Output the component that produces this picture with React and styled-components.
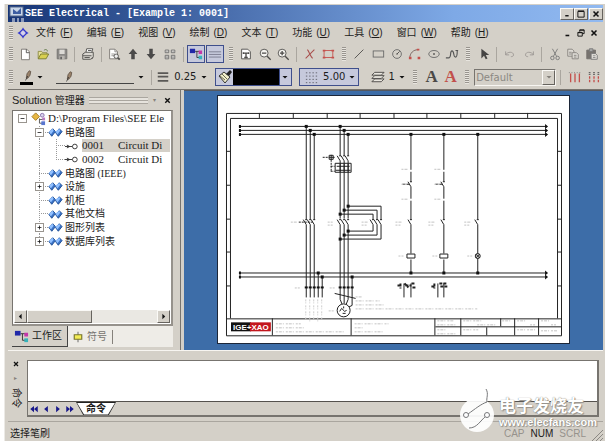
import styled, { createGlobalStyle, css } from "styled-components";

const menus = [["文件", "F"], ["编辑", "E"], ["视图", "V"], ["绘制", "D"], ["文本", "T"], ["功能", "U"], ["工具", "O"], ["窗口", "W"], ["帮助", "H"]];

const standardTools = ["new", "open", "save", "|", "print", "|", "find", "up", "down", "props", "|", "tree*", "lines*", "#", "pageText", "zoomOut", "zoomIn", "|", "cross", "area", "#", "line", "rect", "circle", "arc", "ellipse", "spline", "#", "cursor", "|", "undo", "redo", "|", "cut", "copy", "paste"];

const treeRows = [
    { level: 0, text: "D:\\Program Files\\SEE Ele", icon: "project", toggle: "-" },
    { level: 1, text: "电路图", icon: "folder", toggle: "-" },
    { level: 2, text: "0001", detail: "Circuit Di", icon: "sheet", selected: true },
    { level: 2, text: "0002", detail: "Circuit Di", icon: "sheet", last: true },
    { level: 1, text: "电路图 (IEEE)", icon: "folder" },
    { level: 1, text: "设施", icon: "folder", toggle: "+" },
    { level: 1, text: "机柜", icon: "folder" },
    { level: 1, text: "其他文档", icon: "folder" },
    { level: 1, text: "图形列表", icon: "folder", toggle: "+" },
    { level: 1, text: "数据库列表", icon: "folder", toggle: "+", last: true },
];

const g = "#4c4a48";
const red = "#c4504c";

const icons = {
    logo: <><rect x="1" y="1" width="13" height="9" fill="#c9d6e8" stroke="#54698c" /><path d="M4 3l4 3 4-4v6H4z" fill="#3d5ea2" /><path d="M3 13h3M3 15h3M8 13h2M8 15h2M12 13h3M12 15h3" stroke="#fff" /></>,
    diamond: <g fill="none" stroke="#3438d0"><path d="M8 3.500l4.500 4.500L8 12.500 3.500 8z" strokeWidth="1.500" /><path d="M8 2v3M8 11v3M2 8h3M11 8h3" /><circle cx="8" cy="8" r="2" fill="#d4d0f8" stroke="none" /></g>,
    new: <><path d="M4 2.500h6l3 3v9H4z" fill="#fff" stroke="#77736e" /><path d="M9.500 2.500v4H13" fill="none" stroke={g} /></>,
    open: <><path d="M2.500 13V5h4l1 1.500h5V8" fill="#e8e29a" stroke="#8a8840" /><path d="M2.500 13.500l3-5.500h9l-3 5.500z" fill="#d8cf50" stroke="#75782c" /><path d="M9 4c2-2 4-1 4 1" fill="none" stroke="#56703c" /></>,
    save: <><path d="M2.500 2.500h11v11h-11z" fill="#8c8a88" stroke="#74716e" /><path d="M5 3h6v5H5z" fill="#dcdad6" /><path d="M5 10h6v4H5z" fill="#b8b5b0" /><path d="M6 11h2v3H6z" fill="#666" /></>,
    print: <g fill="#d9d6d0" stroke={g}><path d="M5.500 7l1-5h7l-1.500 5" fill="#fff" /><path d="M2 8l3-2h9v5l-3 3H2z" /><path d="M2 10h10M8 4h4M12 14l2-2M4 12h6" /></g>,
    find: <><path d="M3 2.500h6l3 3v8H3z" fill="#fff" stroke="#77736e" /><path d="M9 2.500v3h3M5 8h4M5 10h3" fill="none" stroke="#8a8886" /><circle cx="10.500" cy="10.500" r="2.500" fill="#eee" stroke={g} /><path d="M12.500 12.500l2 2" stroke={g} strokeWidth="2" /></>,
    up: <path d="M8 2l5 6h-3v6H6V8H3z" fill="#4b4a49" />,
    down: <path d="M8 14l5-6h-3V2H6v6H3z" fill="#4b4a49" />,
    props: <g fill="none" stroke="#666"><path d="M2.500 3.500h4v3h-4zM9.500 3.500h4v3h-4zM2.500 9.500h4v4h-4zM9.500 9.500h4v4h-4z" fill="#f3f1ed" /><path d="M3 11.500h3M10 11.500h3M4 5h1M11 5h1" /></g>,
    tree: <><path d="M7 5h5M9 5v7h3" stroke="#333" fill="none" /><path d="M1 2h6v5H1z" fill="#2028a8" /><path d="M11 4h4v4h-4z" fill="#c338a9" /><path d="M11 10h4v4h-4z" fill="#35b3bb" /></>,
    lines: <path d="M1 5.500h14M1 8.500h14M1 11.500h14" stroke="#77788c" />,
    pageText: <><path d="M3 2.500h7l3 3v8H3z" fill="#fff" stroke={g} /><path d="M5 6v2M5 7h6V6v2M8 7v5M6 12h4" fill="none" stroke={g} strokeWidth="1.500" /></>,
    zoomOut: <g fill="#f5f4f0" stroke={g}><circle cx="7" cy="7" r="4.500" /><path d="M4.500 7h5M10.500 10.500l4 4" strokeWidth="1.500" /></g>,
    zoomIn: <g fill="#f5f4f0" stroke={g}><circle cx="7" cy="7" r="4.500" /><path d="M4.500 7h5M7 4.500v5M10.500 10.500l4 4" strokeWidth="1.500" /></g>,
    cross: <path d="M3 13L13 3M5 3c2 2 3 7 6 10" fill="none" stroke="#a84e4c" strokeWidth="1.200" />,
    area: <><rect x="3.500" y="4" width="10" height="8" fill="none" stroke={red} /><path d="M2 3h3v2H2zM12 3h3v2h-3zM2 11h3v2H2zM12 11h3v2h-3z" fill={red} /></>,
    line: <path d="M3 13L13 3" stroke={g} />,
    rect: <rect x="2.500" y="4.500" width="12" height="7" fill="none" stroke="#666" />,
    circle: <><circle cx="8" cy="8" r="5" fill="none" stroke="#666" /><path d="M8 8l3-3M7 8h2" stroke={g} /></>,
    arc: <><path d="M2 13C2 7 6 3 12 3" fill="none" stroke="#725c58" /><path d="M10 2h3v2h-3zM1 11h3v3H1zM11 11h3v3h-3z" fill={red} /></>,
    ellipse: <><ellipse cx="8" cy="8" rx="6" ry="4" fill="none" stroke="#666" /><path d="M7 8h2M8 7v2" stroke={g} /></>,
    spline: <path d="M1 12.500h3c4 0 1-8 4-8 3 0 1 7 4 7 2 0 2-3 2-7M12 4h3" fill="none" stroke="#555" strokeWidth="1.300" />,
    cursor: <path d="M5 2v11l3-3 2 4 2-1-2-4h4z" fill="#454443" />,
    undo: <path d="M3 5v4h4M3 9c2-4 9-4 9 0 0 2-2 2-3 2" fill="none" stroke="#9a9692" />,
    redo: <path d="M13 5v4H9M13 9c-2-4-9-4-9 0 0 2 2 2 3 2" fill="none" stroke="#9a9692" />,
    cut: <g fill="none" stroke="#777"><path d="M5 2l5 9M11 2L6 11" /><circle cx="5" cy="12.500" r="2" /><circle cx="11" cy="12.500" r="2" /></g>,
    copy: <g fill="#dedbd5" stroke="#85817d"><path d="M2 2.500h5l2 2v6H2z" /><path d="M7 6.500h5l2 2v5H7z" /><path d="M3.500 6h3M3.500 8h3M9 9.500h3M9 11.500h3" /></g>,
    paste: <><path d="M2 3.500h10v10H2z" fill="#77736f" stroke="#77736f" /><path d="M5 2h4v3H5z" fill="#aaa" stroke="#777" /><path d="M7 7.500h5l2 2v4.500H7z" fill="#e3e0da" stroke="#777" /><path d="M9 10h3M9 12h3" stroke="#888" /></>,
    pen: <><path d="M7 11l1-6 3-4 2 1-1 5-3 4z" fill="#9c846c" stroke="#55483c" /><path d="M6 14l3-6" stroke="#333" /></>,
    weight: <path d="M2 3.500h12M2 7.500h12M2 12.500h12" stroke="#5a5856" strokeWidth="2" />,
    brush: <><path d="M2 7l5-4 6 5-5 6z" fill="#f0eecb" stroke="#333" /><path d="M3 7l5 4M5 5l5 5" stroke="#68664e" /><path d="M9 5l4-4 2 2-3 4z" fill="#222" /></>,
    dots: <path d="M2 3h13M2 6.500h13M2 10h13M2 13.500h13" stroke="#62636e" strokeDasharray="1.500 2" />,
    layers: <g fill="#e9e6df" stroke="#4d4b49"><path d="M2 12.500l3-3h10l-3 3z" /><path d="M2 9l3-3h10l-3 3z" /><path d="M2 5.500l3-3h10l-3 3z" /></g>,
    bars: <><path d="M3 4v10M8 4v10M13 4v10" stroke={red} strokeWidth="1.500" /><path d="M1 3h14" stroke="#777" strokeDasharray="1 2" /></>,
    dotBars: <><path d="M3 7v7M8 7v7M13 7v7" stroke={red} strokeWidth="1.500" strokeDasharray="3 1" /><path d="M2 3h12M2 5h12" stroke="#444" strokeDasharray="2 3" /></>,
    project: <><path d="M5 2l4 4-4 4-4-4z" fill="#e7b743" stroke="#a17b25" /><circle cx="12" cy="4.500" r="2" fill="#dad3ee" stroke="#8c72ad" /><path d="M9 8v5h3M9 9h4" stroke="#555" fill="none" /><rect x="12" y="7" width="3" height="3" fill="#b878c0" /><rect x="11" y="11" width="4" height="4" fill="#5976cf" /></>,
    folder: <><path d="M1 8l4-4 3 3-4 5z" fill="#3972c7" stroke="#1d4c92" /><path d="M1 7l4-3 1 2-3 4z" fill="#91c0ff" /><path d="M8 8l4-4 3 3-4 5z" fill="#3972c7" stroke="#1d4c92" /><path d="M8 7l4-3 1 2-3 4z" fill="#91c0ff" /></>,
    sheet: <><path d="M0 8h8M2 6.500l3 1.500-3 1.500" fill="none" stroke="#333" /><circle cx="10.500" cy="8" r="2.500" fill="#fff" stroke="#333" /></>,
    symbol: <><path d="M8 1v14" stroke="#444" /><path d="M3 5h10v6H3z" fill="#f3ed55" stroke="#77742a" strokeWidth="1.500" /></>,
    close: <path d="M4 4l8 8M12 4l-8 8" stroke="#111" strokeWidth="2.500" />,
    minimize: <path d="M4 12h6" stroke="#111" strokeWidth="2.500" />,
    maximize: <path d="M3 4h10v9H3zM3 3h10" fill="none" stroke="#111" strokeWidth="1.500" />,
    restore: <path d="M6 6V3h7v6h-3M6 3.500h7M3 7h7v6H3zM3 7.500h7" fill="none" stroke="#111" strokeWidth="1.500" />,
    left: <path d="M10 3v10L5 8z" fill="#111" />,
    right: <path d="M6 3v10l5-5z" fill="#111" />,
    first: <path d="M8 3v10L2 8zM14 3v10L8 8z" fill="#18188a" />,
    prev: <path d="M11 3v10L5 8z" fill="#18188a" />,
    next: <path d="M5 3v10l6-5z" fill="#18188a" />,
    end: <path d="M2 3v10l6-5zM8 3v10l6-5z" fill="#18188a" />,
    drop: <path d="M3 6h10l-5 5z" fill="#111" />,
};

function Icon({ name, size = 14 }) {
    return <Svg viewBox="0 0 16 16" $size={size} aria-hidden="true">{icons[name]}</Svg>;
}

function Tool({ name }) {
    if (name === "|") return <Divider />;
    if (name === "#") return <Grip />;
    const active = name.endsWith("*");
    const id = name.replace("*", "");
    return <ToolButton aria-label={id} aria-pressed={active} $active={active}><Icon name={id} /></ToolButton>;
}

function Drop({ label, framed }) {
    return <DropButton aria-label={label} $framed={framed}><Icon name="drop" size={8} /></DropButton>;
}

function TreeItem({ row }) {
    return (
        <TreeRow>
            {row.level > 0 && <Guide />}
            {row.level === 2 && <Guide $down />}
            <Guide $down={row.level > 0} $across={row.level > 0} $last={row.last}>
                {row.toggle && <Toggle aria-label={`${row.toggle === "-" ? "收起" : "展开"} ${row.text}`}>
                    <Svg viewBox="0 0 9 9" $size={9}><path d={row.toggle === "+" ? "M2 4.500h5M4.500 2v5" : "M2 4.500h5"} stroke="#111" /></Svg>
                </Toggle>}
            </Guide>
            <TreeIcon><Icon name={row.icon} size={15} /></TreeIcon>
            <TreeLabel $selected={row.selected} $small={row.level === 1}>{row.text}{row.detail && <span>{row.detail}</span>}</TreeLabel>
        </TreeRow>
    );
}

// A contact: a slanted blade between two conductor ends
const Contacts = ({ xs, y }) => xs.map(x => <path key={x} d={`M${x} ${y + 5}l-3 -5M${x - 1} ${y}h2`} />);

const Note = ({ x, y, w }) => <path d={`M${x} ${y}h${w}`} stroke="#c3c3c3" strokeDasharray="2 1 3 1 1 2" />;

function Schematic() {
    const dots = [[306, 126], [310, 130], [314, 134], [340, 126], [344, 130], [348, 134], [348, 206], [344, 210], [340, 214], [348, 231], [344, 235], [340, 239], [411, 134], [444, 134], [478, 134], [411, 273], [444, 273], [478, 273], [318, 273], [322, 277], [352, 277]];
    const notes = [[291, 222, 6], [328, 222, 5], [328, 225, 5], [362, 222, 6], [362, 225, 5], [396, 222, 7], [396, 225, 5], [429, 222, 7], [429, 225, 5], [465, 222, 7], [465, 225, 5], [402, 169, 7], [402, 184, 5], [402, 199, 7], [435, 169, 7], [435, 184, 5], [435, 199, 7], [399, 256, 5], [433, 256, 5], [468, 256, 5], [295, 288, 5], [330, 288, 5], [329, 311, 5], [356, 297, 6], [356, 301, 24], [356, 305, 28], [356, 309, 123], [276, 324, 25], [276, 328, 28], [276, 332, 69], [355, 324, 34], [355, 328, 9], [355, 332, 30], [438, 321, 16], [438, 325, 20], [438, 330, 10], [438, 334, 20], [464, 321, 18], [478, 325, 19], [464, 330, 15], [503, 321, 8], [518, 321, 9], [531, 325, 5], [518, 330, 18], [542, 321, 9], [552, 325, 5], [542, 331, 16]];
    return (
        <Drawing viewBox="218 96 352 248" role="img" aria-label="Circuit Diagram">
            <g fill="none" stroke="#222" strokeWidth="1">
                <path d="M226.500 113.500h336v223h-336zM230.500 118.500h328v200.500M230.500 118.500v200.500M226.500 319.500h336" />
                <path d="M259.500 113v5M293.500 113v5M327.500 113v5M360.500 113v5M394.500 113v5M427.500 113v5M461.500 113v5M495.500 113v5M528.500 113v5" />
                <path d="M226 151.500h4M226 185.500h4M226 219.500h4M226 252.500h4M226 286.500h4M558 151.500h4M558 185.500h4M558 219.500h4M558 252.500h4M558 286.500h4" />
                <path d="M272.500 319v17M351.500 319v17M435.500 319v17M461.500 319v17M501.500 319v8M487.500 328v8M515.500 319v17M539.500 319v17M436 327.500h126" />
                <path d="M239 126.500h308M239 130.500h308M239 134.500h308M239 273.500h308M239 277.500h308" />
                <path d="M306.500 126v94M310.500 130v90M314.500 134v86M306.500 225v73M310.500 225v73M314.500 225v73M318.500 273v25M322.500 277v21" />
                <path d="M340.500 126v30M344.500 130v26M348.500 134v22M340.500 161v58M344.500 161v58M348.500 161v58M340.500 225v75l2 5M344.500 225v79M348.500 225v75l-2 5M352.500 277v29l-4 2" />
                <path d="M348 206.500h33.500V220M344 210.500h33.500V220M340 214.500h33.500V220M373.500 225v6.500H348M377.500 225v10.500H344M381.500 225v14.500H340" />
                <path d="M411.500 134v36M411.500 172v10M411.500 187v12M411.500 201v19M411.500 225v29M411.500 260v13M444.500 134v36M444.500 172v10M444.500 187v12M444.500 201v19M444.500 225v29M444.500 260v13M478.500 134v86M478.500 225v48" />
                <path d="M404.500 284v14M411.500 284v14M438.500 284v14M444.500 284v14M335 294l21 5" />
                <path d="M335.500 163.500h16v9h-16zM340.500 164v8M344.500 164v8M348.500 164v8M337 166.500h13M336 170.500h15M329.500 155.500h4v4h-4zM329 157.500h6M331.500 155v5" />
                <path d="M323 157.500h5M331.500 160v12M331 166.500h4M331 171.500h4M299 222.500h14" strokeDasharray="2 1" />
                <path d="M407.500 254.500h8v4h-8zM440.500 254.500h8v4h-8z" fill="#fff" />
                <circle cx="478.500" cy="256.500" r="2.500" fill="#ddd" />
                <path d="M476.500 254.500l4 4M480.500 254.500l-4 4" />
                <circle cx="344" cy="311" r="6.500" fill="#fff" />
                <path d="M340 312l2-3 3 3 2-1M343 314h3M344 307v2" />
                <Contacts xs={[340.500, 344.500, 348.500]} y={156} />
                <Contacts xs={[306.500, 310.500, 314.500, 340.500, 344.500, 348.500, 373.500, 377.500, 381.500, 411.500, 444.500, 478.500]} y={220} />
                <Contacts xs={[411.500, 444.500]} y={182} />
                <path d="M403 184.500h7M436 184.500h7" strokeDasharray="3 1" />
                <path d="M398 286h4M401 284v5M405 284l4 4M406 286h6M412 284h4M413 288h3M432 287h4M435 284v5M440 284h8M441 287h7" strokeWidth="2" strokeDasharray="3 1" />
            </g>
            <g fill="#111">
                {dots.map(([x, y]) => <rect key={`${x}-${y}`} x={x - 1} y={y - 1} width="3" height="3" />)}
                {[306, 310, 314, 318, 322, 340, 344, 348, 352].map(x => <rect key={x} x={x - 1} y="287" width="3" height="2" />)}
                {[126, 130, 134, 273, 277].map(y => <path key={y} d={`M546 ${y - 2}l3 2.500-3 2.500zM239 ${y - 1}h2v3h-2z`} />)}
            </g>
            <g fill="none">
                {notes.map(([x, y, w]) => <Note key={`${x}-${y}`} x={x} y={y + .5} w={w} />)}
                <path d="M306 300v20M310 300v22M314 300v20M318 300v22M322 300v20" stroke="#ccc" strokeDasharray="2 1 1 2" />
            </g>
            <path d="M231 323h20v9h-20z" fill="#111" />
            <path d="M250 323h21v9h-21z" fill="#c3161d" />
            <BrandText x="251" y="330.500" textAnchor="middle">IGE+XAO</BrandText>
        </Drawing>
    );
}

export default function App() {
    return (
        <>
            <GlobalStyle />
            <Window>
                <TitleBar>
                    <Icon name="logo" size={16} />
                    <Title>SEE Electrical - [Example 1: 0001]</Title>
                    <CaptionButton aria-label="最小化"><Icon name="minimize" size={9} /></CaptionButton>
                    <CaptionButton aria-label="最大化"><Icon name="maximize" size={10} /></CaptionButton>
                    <CaptionButton $apart aria-label="关闭"><Icon name="close" size={10} /></CaptionButton>
                </TitleBar>

                <MenuBar>
                    <Grip />
                    <Icon name="diamond" size={14} />
                    <Menus>
                        {menus.map(([name, key]) => <MenuButton key={key}><span>{name}</span><span>(<u>{key}</u>)</span></MenuButton>)}
                    </Menus>
                    <PlainButton aria-label="最小化文档"><Icon name="minimize" size={10} /></PlainButton>
                    <PlainButton aria-label="还原文档"><Icon name="restore" size={10} /></PlainButton>
                    <PlainButton aria-label="关闭文档"><Icon name="close" size={10} /></PlainButton>
                </MenuBar>

                <Toolbar>
                    <Grip />
                    {standardTools.map((name, index) => <Tool key={index} name={name} />)}
                </Toolbar>

                <FormatBar>
                    <Grip />
                    <PenButton aria-label="颜色"><Icon name="pen" size={12} /><Swatch /></PenButton>
                    <Drop label="颜色列表" />
                    <PenButton $wide aria-label="线型"><Icon name="pen" size={12} /><Stroke /></PenButton>
                    <Drop label="线型列表" />
                    <Divider />
                    <Value><Icon name="weight" />0.25</Value>
                    <Drop label="线宽" />
                    <Pressed>
                        <PlainButton aria-label="选择笔刷"><Icon name="brush" size={16} /></PlainButton>
                        <Fill />
                        <Drop label="填充" framed />
                    </Pressed>
                    <Pressed $spaced>
                        <Value><Icon name="dots" size={15} />5.00</Value>
                        <Drop label="网格" />
                    </Pressed>
                    <Layer><Icon name="layers" size={15} />1</Layer>
                    <Drop label="图层" />
                    <Grip />
                    <LetterButton aria-label="文本">A</LetterButton>
                    <LetterButton $red aria-label="文本属性">A</LetterButton>
                    <Grip />
                    <SelectBox>
                        <select disabled aria-label="样式"><option>Default</option></select>
                        <SelectArrow><Icon name="drop" size={8} /></SelectArrow>
                    </SelectBox>
                    <Divider />
                    <ToolButton aria-label="bars"><Icon name="bars" /></ToolButton>
                    <ToolButton aria-label="dotBars"><Icon name="dotBars" /></ToolButton>
                </FormatBar>

                <Workspace>
                    <Side>
                        <SideTitle>
                            <h2>Solution <span>管理器</span></h2>
                            <Ridges />
                            <Pin>▾</Pin>
                            <PlainButton aria-label="关闭面板"><Icon name="close" size={9} /></PlainButton>
                        </SideTitle>
                        <TreeBox>
                            <Tree>{treeRows.map((row, index) => <TreeItem key={index} row={row} />)}</Tree>
                            <ScrollBar>
                                <ScrollButton aria-label="向左"><Icon name="left" size={9} /></ScrollButton>
                                <Thumb />
                                <Track />
                                <ScrollButton aria-label="向右"><Icon name="right" size={9} /></ScrollButton>
                            </ScrollBar>
                        </TreeBox>
                        <Tabs>
                            <Tab $active><Icon name="tree" size={15} />工作区</Tab>
                            <Tab><Icon name="symbol" size={12} />符号</Tab>
                            <TabEdge />
                        </Tabs>
                    </Side>
                    <Canvas><Paper><Schematic /></Paper></Canvas>
                </Workspace>

                <Dock>
                    <DockSide>
                        <PlainButton aria-label="关闭命令"><Icon name="close" size={8} /></PlainButton>
                        <Pin>▸</Pin>
                        <DockName>命令</DockName>
                    </DockSide>
                    <Console>
                        <Output aria-label="命令输出" />
                        <Sheets>
                            {["first", "prev", "next", "end"].map(name => <PlainButton key={name} aria-label={name}><Icon name={name} size={10} /></PlainButton>)}
                            <SheetTab><span>命令</span></SheetTab>
                        </Sheets>
                    </Console>
                </Dock>

                <StatusBar>
                    <p>选择笔刷</p>
                    <Key>CAP</Key><Key $on>NUM</Key><Key>SCRL</Key>
                    <Svg viewBox="0 0 12 12" $size={12}><path d="M1 12L12 1M5 12l7-7M9 12l3-3" stroke="#8b8883" /></Svg>
                </StatusBar>

                <Watermark>
                    <svg viewBox="0 0 36 46" width="36" height="46" aria-hidden="true">
                        <circle cx="18" cy="27" r="17" fill="#fff" fillOpacity=".92" />
                        <path d="M27 1c3 5 0 9 1 13-6 2-12 7-19 12M10 40c8 0 11-7 17-12" fill="none" stroke="#77787a" />
                        <circle cx="7" cy="27" r="2.500" fill="#fff" stroke="#77787a" />
                        <circle cx="28" cy="27" r="2.500" fill="#fff" stroke="#77787a" />
                    </svg>
                    <div><strong>电子发烧友</strong><small>www.elecfans.com</small></div>
                </Watermark>
            </Window>
        </>
    );
}

const sans = `"Liberation Sans", "Noto Sans CJK SC", sans-serif`;
const serif = `"Liberation Serif", "Noto Sans CJK SC", serif`;

const GlobalStyle = createGlobalStyle`
    * {
        box-sizing: border-box;
    }
    body {
        margin: 0;
        background: #fff;
        color: #1c1c1c;
        font-family: ${sans};
        font-size: 10px;
        line-height: 12px;
    }
    button {
        padding: 0;
        border: 0;
        background: none;
        color: inherit;
        font: inherit;
    }
    h1, h2, p, ul {
        margin: 0;
        padding: 0;
        font-size: inherit;
        font-weight: normal;
    }
`

const sunken = css`
    border: 1px solid;
    border-color: #77746f #f7f5f1 #f7f5f1 #77746f;
`

const raised = css`
    border: 1px solid;
    border-color: #fbfaf7 #66635e #66635e #fbfaf7;
    background: #d4d0c8;
`

const Window = styled.main`
    position: relative;
    display: flex;
    flex-direction: column;
    min-height: calc(100vh - 5px);
    margin: 4px 1px 1px 4px;
    padding: 1px 2px 0 3px;
    background: #d4d0c8;
    border-left: 1px solid #eceae6;
`

const Svg = styled.svg`
    display: block;
    flex: none;
    width: ${(props) => props.$size}px;
    height: ${(props) => props.$size}px;
`

const TitleBar = styled.header`
    display: flex;
    align-items: center;
    height: 17px;
    padding: 0 0 0 1px;
    background: linear-gradient(90deg, #173576, #7ea9e6 75%, #91b9f0);
`

const Title = styled.h1`
    flex: 1;
    color: #fff;
    font-family: "Liberation Mono", monospace;
    font-weight: bold;
    white-space: pre;
`

const CaptionButton = styled.button`
    ${raised}
    display: flex;
    align-items: center;
    justify-content: center;
    width: 14px;
    height: 12px;
    margin-left: ${(props) => props.$apart ? "1px" : "0"};
`

const MenuBar = styled.nav`
    display: flex;
    align-items: center;
    height: 21px;
    padding: 0 3px 0 1px;
    gap: 1px;
`

const Menus = styled.div`
    display: flex;
    flex: 1;
    gap: 14px;
    padding-left: 5px;
`

const MenuButton = styled.button`
    display: flex;
    gap: 4px;
    white-space: nowrap;
`

const PlainButton = styled.button`
    display: flex;
    align-items: center;
    justify-content: center;
    min-width: 12px;
`

const Grip = styled.span`
    flex: none;
    width: 4px;
    height: 14px;
    margin: 0 4px;
    background: repeating-linear-gradient(#98948e 0 1px, #e8e5df 1px 2px);

    &:first-child {
        margin: 0 2px 0 0;
    }
`

const Divider = styled.span`
    flex: none;
    width: 1px;
    height: 15px;
    margin: 0 3px;
    background: #aaa69f;
`

const Toolbar = styled.div`
    display: flex;
    align-items: center;
    justify-content: space-between;
    height: 22px;
    padding: 0 2px 0 1px;
`

const ToolButton = styled.button`
    display: flex;
    flex: none;
    align-items: center;
    justify-content: center;
    width: 18px;
    height: 18px;
    ${(props) => props.$active && css`
        border: 1px solid #3f4f8c;
        background: #c6c9dc;
    `}
`

const FormatBar = styled(Toolbar)`
    height: 24px;
    padding-right: 0;
`

const PenButton = styled.button`
    display: flex;
    flex-direction: column;
    width: ${(props) => props.$wide ? "78px" : "13px"};
    margin-left: ${(props) => props.$wide ? "8px" : "4px"};

    svg {
        margin-left: ${(props) => props.$wide ? "6px" : "1px"};
    }
`

const Swatch = styled.span`
    align-self: stretch;
    height: 3px;
    background: #000;
`

const Stroke = styled.span`
    align-self: stretch;
    height: 1px;
    background: #444;
`

const Value = styled.span`
    display: flex;
    align-items: center;
    gap: 4px;
    font-family: "DejaVu Sans", sans-serif;
`

const Layer = styled(Value)`
    padding-left: 9px;
`

const DropButton = styled(PlainButton)`
    ${(props) => props.$framed && css`
        align-self: stretch;
        border-left: 1px solid #3f4f8c;
    `}
`

const Pressed = styled.div`
    display: flex;
    align-items: center;
    height: 18px;
    margin-left: ${(props) => props.$spaced ? "6px" : "4px"};
    padding: ${(props) => props.$spaced ? "0 0 0 4px" : "0 0 0 1px"};
    border: 1px solid #3f4f8c;
    background: #c6c9dc;

    ${DropButton} {
        margin-left: ${(props) => props.$spaced ? "1px" : "0"};
    }
`

const Fill = styled.span`
    width: 46px;
    height: 16px;
    background: #000;
`

const LetterButton = styled.button`
    width: 18px;
    color: ${(props) => props.$red ? "#c2504c" : "#4b4947"};
    font-family: "Liberation Serif", serif;
    font-size: 17px;
    font-weight: bold;
    line-height: 18px;
`

const SelectBox = styled.div`
    ${sunken}
    display: flex;
    width: 82px;
    height: 17px;

    select {
        flex: 1;
        min-width: 0;
        padding: 0 1px;
        border: 0;
        appearance: none;
        background: transparent;
        color: #8b8883;
        font: 10px "DejaVu Sans", sans-serif;
        opacity: 1;
    }
    path {
        fill: #85817b;
    }
`

const SelectArrow = styled.span`
    ${raised}
    display: flex;
    align-items: center;
    justify-content: center;
    width: 13px;
`

const Workspace = styled.div`
    display: flex;
    flex: 1;
    border-top: 1px solid #77746f;
`

const Side = styled.aside`
    display: flex;
    flex: 0 0 173px;
    flex-direction: column;
    padding: 1px 7px 3px 4px;
    border-right: 1px solid #77746f;
`

const SideTitle = styled.div`
    display: flex;
    align-items: center;
    height: 18px;
    margin-bottom: 1px;

    h2 {
        font-size: 11px;
        white-space: nowrap;
    }
    h2 span {
        font-size: 10px;
    }
`

const Ridges = styled.span`
    flex: 1;
    height: 7px;
    margin-left: 4px;
    background: repeating-linear-gradient(#aaa69f 0 1px, #e6e3dd 1px 3px);
`

const Pin = styled.span`
    padding: 0 5px;
    color: #85817b;
    font-size: 6px;
    line-height: 8px;
`

const TreeBox = styled.div`
    ${sunken}
    display: flex;
    flex: 1;
    flex-direction: column;
    padding: 1px;
    border-width: 1px 2px 2px 1px;
    border-right-color: #96928c;
    border-bottom-color: #96928c;
    background: #fff;
`

const Tree = styled.ul`
    display: grid;
    grid-auto-rows: 1fr;
    height: 136px;
    margin-bottom: auto;
    list-style: none;
`

const TreeRow = styled.li`
    display: flex;
    align-items: center;
    min-width: 0;
    overflow: hidden;
`

const Guide = styled.span`
    display: flex;
    flex: none;
    align-items: center;
    justify-content: center;
    align-self: stretch;
    width: 17px;
    background-image: ${(props) => props.$down ? "repeating-linear-gradient(#999 0 1px, transparent 1px 2px)" : "none"}, ${(props) => props.$across ? "repeating-linear-gradient(90deg, #999 0 1px, transparent 1px 2px)" : "none"};
    background-position: 8px 0, 8px 50%;
    background-repeat: no-repeat;
    background-size: 1px ${(props) => props.$last ? "50%" : "100%"}, 9px 1px;
`

const Toggle = styled.button`
    border: 1px solid #99958f;
    background: #fff;

    svg {
        width: 7px;
        height: 7px;
    }
`

const TreeIcon = styled.span`
    flex: none;
    width: 17px;
`

const TreeLabel = styled.span`
    flex: 1;
    background: ${(props) => props.$selected ? "#d4d0c8" : "none"};
    font-family: ${serif};
    font-size: ${(props) => props.$small ? "10px" : "11px"};
    line-height: 13px;
    white-space: nowrap;

    span {
        margin-left: 14px;
    }
`

const ScrollBar = styled.div`
    display: flex;
    height: 13px;
`

const ScrollButton = styled.button`
    ${raised}
    display: flex;
    align-items: center;
    justify-content: center;
    width: 13px;
`

const Thumb = styled.span`
    ${raised}
    flex: 50;
`

const Track = styled.span`
    flex: 52;
    background: #eae8e3;
`

const Tabs = styled.div`
    display: flex;
    height: 21px;
    background: #eeece7;
`

const Tab = styled.button`
    display: flex;
    align-items: center;
    gap: 3px;
    padding: 0 5px 0 2px;
    color: ${(props) => props.$active ? "#1c1c1c" : "#77746f"};
    ${(props) => props.$active ? css`
        border-right: 1px solid #444;
        border-bottom: 1px solid #444;
        background: #d4d0c8;
    ` : css`
        padding-left: 4px;
    `}
`

const TabEdge = styled.span`
    align-self: center;
    width: 1px;
    height: 14px;
    background: #85817b;
`

const Canvas = styled.section`
    flex: 1;
    min-width: 0;
    margin-left: 3px;
    padding: 4px 33px 5px;
    background: #3d6da8;
    border-top: 1px solid #55585f;
`

const Paper = styled.div`
    border: 1px solid #1c2638;
    background: #fff;
`

const Drawing = styled.svg`
    display: block;
    width: 100%;
`

const BrandText = styled.text`
    fill: #fff;
    font-family: ${sans};
    font-size: 8px;
    font-weight: bold;
`

const Dock = styled.section`
    display: flex;
    height: 71px;
    padding: 9px 4px 4px 0;
    border-top: 1px solid #f7f5f1;
`

const DockSide = styled.div`
    display: flex;
    flex-direction: column;
    align-items: center;
    width: 19px;
    padding-right: 4px;
    gap: 6px;
`

const DockName = styled.span`
    writing-mode: vertical-rl;
    text-orientation: sideways;
`

const Console = styled.div`
    ${sunken}
    display: flex;
    flex: 1;
    flex-direction: column;
    border-right: 2px solid #77746f;
    border-bottom: 2px solid #77746f;
`

const Output = styled.output`
    flex: 1;
    background: #fff;
`

const Sheets = styled.div`
    display: flex;
    height: 14px;
    border-top: 1px solid #55524e;
`

const SheetTab = styled.button`
    width: 40px;
    height: 13px;
    clip-path: polygon(0 0, 100% 0, 82% 100%, 18% 100%);
    background: #222;
    font-weight: bold;

    span {
        display: block;
        height: 12px;
        clip-path: polygon(2% 0, 98% 0, 80% 100%, 20% 100%);
        background: #fff;
    }
`

const StatusBar = styled.footer`
    display: flex;
    align-items: center;
    height: 20px;
    padding: 4px 0 0 2px;
    border-top: 1px solid #aaa69f;

    p {
        flex: 1;
    }
    svg {
        align-self: flex-end;
        margin-left: 2px;
    }
`

const Key = styled.span`
    padding: 0 3px;
    color: ${(props) => props.$on ? "#1c1c1c" : "#96928c"};
`

const Watermark = styled.div`
    position: absolute;
    right: 8px;
    bottom: 7px;
    display: flex;
    gap: 4px;
    color: #fff;
    pointer-events: none;
    text-shadow: 0 0 1px #77746f, 1px 1px 1px #99958f;

    div {
        display: flex;
        flex-direction: column;
        padding-top: 9px;
    }
    strong {
        font-size: 17px;
        line-height: 20px;
    }
    small {
        font-size: 11px;
        font-weight: bold;
        line-height: 10px;
    }
`
